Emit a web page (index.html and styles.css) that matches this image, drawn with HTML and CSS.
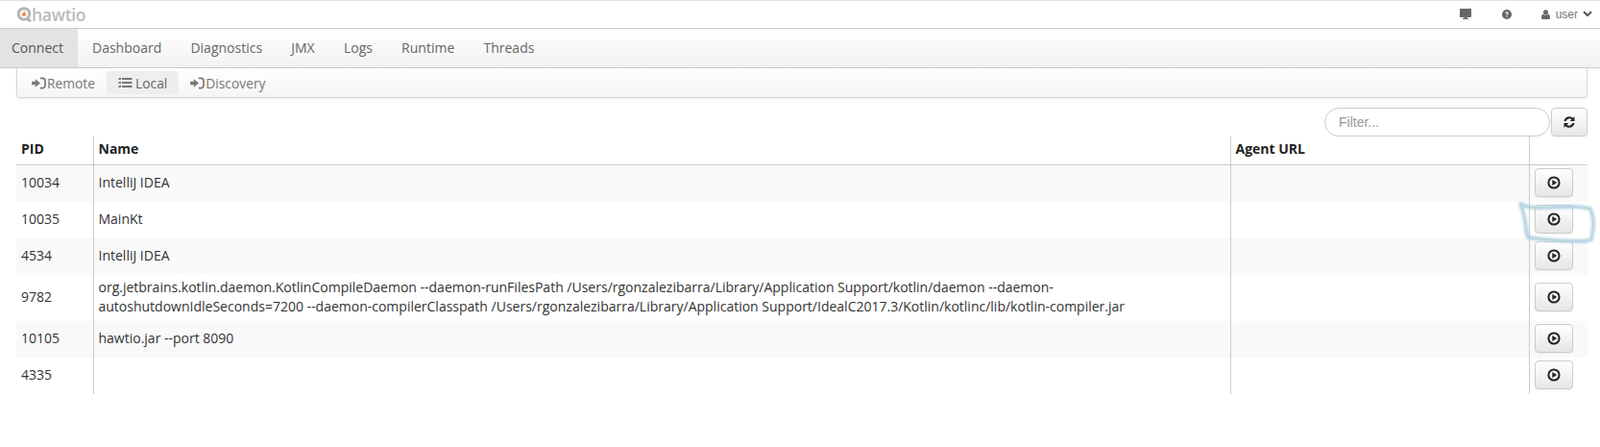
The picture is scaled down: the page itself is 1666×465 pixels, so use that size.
FILE: index.html
```html
<!DOCTYPE html>
<html lang="en">
<head>
<meta charset="utf-8">
<title>hawtio</title>
<link rel="stylesheet" href="styles.css">
</head>
<body>
<svg width="0" height="0" class="defs">
  <defs>
    <symbol id="signin" viewBox="0 0 16 14"><path d="M0 5h4V2.400L9.600 7 4 11.600V9H0z" fill="currentColor"/><path d="M9.500 1.500h2.500a3 3 0 0 1 3 3v5a3 3 0 0 1-3 3H9.500" fill="none" stroke="currentColor" stroke-width="1.800"/></symbol>
    <symbol id="play" viewBox="0 0 14 14"><circle cx="7" cy="7" r="5.600" fill="none" stroke="currentColor" stroke-width="2"/><path d="M5.300 3.900 10.200 7l-4.900 3.100z" fill="currentColor"/></symbol>
  </defs>
</svg>
<header class="masthead">
  <div class="brand">
    <svg class="brand-mark" width="18" height="16" viewBox="0 0 18 16"><circle cx="8" cy="7.500" r="5.800" fill="none" stroke="#b5b5b5" stroke-width="3"/><path d="M11 12l4 3.500" stroke="#b5b5b5" stroke-width="3"/><path d="M8 3.800c.4 1.800 2 2.400 2 4.200a2 2 0 0 1-4 0c0-1 .6-1.500 1-2 .2.600.5.800.8.800.300-1-.2-2-.1-3z" fill="#e8894a"/></svg>
    <span class="brand-name">hawtio</span>
  </div>
  <div class="tools">
    <svg class="tool-icon" width="12" height="11" viewBox="0 0 12 11"><path d="M.8 0h10.400a.8.800 0 0 1 .8.800v7.400a.8.800 0 0 1-.8.800H7.500v1H9v1H3v-1h1.500V9H.8A.8.800 0 0 1 0 8.200V.8A.8.800 0 0 1 .8 0z" fill="#666"/></svg>
    <svg class="tool-icon help" width="10" height="10" viewBox="0 0 11 11"><circle cx="5.500" cy="5.500" r="5.500" fill="#666"/><path d="M3.600 4.200c.1-1.100.9-1.700 1.900-1.700 1.100 0 1.900.6 1.900 1.500 0 1.300-1.400 1.300-1.400 2.300H4.900c0-1.500 1.300-1.500 1.300-2.200 0-.4-.3-.6-.7-.6-.5 0-.8.300-.8.800zM4.900 7.200H6v1.200H4.900z" fill="#fff"/></svg>
    <span class="user">
      <svg width="9" height="10" viewBox="0 0 9 10"><circle cx="4.500" cy="2.700" r="2.500" fill="#666"/><path d="M1.800 4.500C.7 5 0 6.500 0 8.500 0 9.500.6 10 1.400 10h6.200C8.400 10 9 9.500 9 8.500c0-2-.7-3.500-1.800-4-.6.800-1.600 1.200-2.700 1.200S2.400 5.300 1.800 4.500z" fill="#666"/></svg>
      <span class="user-name">user</span>
      <svg width="10" height="7" viewBox="0 0 10 7"><path d="M1 1.200 5 5l4-3.800" fill="none" stroke="#555" stroke-width="2"/></svg>
    </span>
  </div>
</header>
<nav class="mainnav">
  <a class="tab active">Connect</a>
  <a class="tab">Dashboard</a>
  <a class="tab">Diagnostics</a>
  <a class="tab">JMX</a>
  <a class="tab">Logs</a>
  <a class="tab">Runtime</a>
  <a class="tab">Threads</a>
</nav>
<nav class="subnav">
  <a class="pill"><svg class="pill-icon" width="15" height="13"><use href="#signin"/></svg>Remote</a>
  <a class="pill active"><svg class="pill-icon" width="15" height="12" viewBox="0 0 14 12"><path d="M0 1h2.500v2H0zM0 5h2.500v2H0zM0 9h2.500v2H0zM3.500 1H14v2H3.500zM3.500 5H14v2H3.500zM3.500 9H14v2H3.500z" fill="currentColor"/></svg>Local</a>
  <a class="pill"><svg class="pill-icon" width="15" height="13"><use href="#signin"/></svg>Discovery</a>
</nav>
<div class="filterbar">
  <input class="filter" type="text" placeholder="Filter...">
  <button class="btn refresh" type="button"><svg width="14" height="14" viewBox="0 0 14 14"><path d="M1.500 6A5.700 5.700 0 0 1 11 2.800L12.500 1.300V6H7.800l1.700-1.700A3.500 3.500 0 0 0 3.700 6zM12.500 8A5.700 5.700 0 0 1 3 11.200L1.500 12.700V8h4.700l-1.700 1.700A3.500 3.500 0 0 0 10.300 8z" fill="#222"/></svg></button>
</div>
<table class="procs">
  <thead>
    <tr><th class="c-pid">PID</th><th class="c-name">Name</th><th class="c-url">Agent URL</th><th class="c-act"></th></tr>
  </thead>
  <tbody>
    <tr><td>10034</td><td>IntelliJ IDEA</td><td></td><td class="act"><button class="btn run" type="button"><svg width="14" height="14"><use href="#play"/></svg></button></td></tr>
    <tr><td>10035</td><td>MainKt</td><td></td><td class="act"><button class="btn run" type="button"><svg width="14" height="14"><use href="#play"/></svg></button></td></tr>
    <tr><td>4534</td><td>IntelliJ IDEA</td><td></td><td class="act"><button class="btn run" type="button"><svg width="14" height="14"><use href="#play"/></svg></button></td></tr>
    <tr><td>9782</td><td>org.jetbrains.kotlin.daemon.KotlinCompileDaemon --daemon-runFilesPath /Users/rgonzalezibarra/Library/Application Support/kotlin/daemon --daemon-autoshutdownIdleSeconds=7200 --daemon-compilerClasspath /Users/rgonzalezibarra/Library/Application Support/IdealC2017.3/Kotlin/kotlinc/lib/kotlin-compiler.jar</td><td></td><td class="act"><button class="btn run" type="button"><svg width="14" height="14"><use href="#play"/></svg></button></td></tr>
    <tr><td>10105</td><td>hawtio.jar --port 8090</td><td></td><td class="act"><button class="btn run" type="button"><svg width="14" height="14"><use href="#play"/></svg></button></td></tr>
    <tr><td>4335</td><td></td><td></td><td class="act"><button class="btn run" type="button"><svg width="14" height="14"><use href="#play"/></svg></button></td></tr>
  </tbody>
</table>
<svg class="scribble" width="84" height="48" viewBox="0 0 84 48"><path d="M2 5C8 8 12 9 18 9c14 0 28-1 40-1 7 0 12 1 17 2 2 5 3 10 3 15 0 6-1 12-2 17-4 2-9 2-14 2-18 0-36-2-52-4-2-5-2-11-3-17C6 17 4 10 2 5z" fill="none" stroke="#a9cddc" stroke-width="4" stroke-linejoin="round" opacity=".85"/></svg>
</body>
</html>
```

FILE: styles.css
```css
* { box-sizing: border-box; }
html, body { margin: 0; padding: 0; }
body {
  position: relative;
  min-height: 465px;
  overflow: hidden;
  background: #fff;
  color: #333;
  font-family: "Open Sans", "Liberation Sans", sans-serif;
  font-size: 14px;
}
.defs { position: absolute; }

.masthead {
  height: 30px;
  display: flex;
  align-items: center;
  justify-content: space-between;
  border-top: 1px solid #e2e2e2;
  border-bottom: 1px solid #ccc;
  padding: 0 8px 1px 17px;
}
.brand { display: flex; align-items: center; }
.brand-mark { margin-right: -2px; }
.brand-name {
  color: #bbb;
  font-size: 17.5px;
  font-weight: 600;
  line-height: 20px;
  letter-spacing: -0.3px;
}
.tools { display: flex; align-items: center; color: #666; }
.tool-icon { display: block; }
.help { margin-left: 32px; }
.user { display: flex; align-items: center; margin-left: 31px; }
.user-name {
  margin: 0 5px 0 6px;
  font-family: "Liberation Sans", Arial, sans-serif;
  font-size: 12px;
  color: #777;
}

.mainnav {
  height: 41px;
  display: flex;
  background: linear-gradient(#fff, #f2f2f2);
  border-bottom: 1px solid #ccc;
}
.tab {
  display: flex;
  align-items: center;
  padding: 0 15px 2px;
  margin-right: 0.2px;
  color: #666;
  font-size: 14px;
}
.tab.active {
  background: #e3e3e3;
  color: #555;
  margin-right: 0;
  padding: 0 15px 2px 12px;
}

.subnav {
  height: 31px;
  margin: 0 13px 0 17px;
  padding: 0 3px;
  display: flex;
  align-items: center;
  background: linear-gradient(#fff, #f5f5f5);
  border: 1px solid #d8d8d8;
  border-top: 0;
  border-radius: 0 0 4px 4px;
  box-shadow: 0 1px 3px rgba(0, 0, 0, .08);
}
.pill {
  display: flex;
  align-items: center;
  height: 24px;
  padding: 0 12px;
  color: #777;
  font-size: 13.8px;
  border-radius: 3px;
}
.pill.active { background: #eee; color: #666; }
.pill-icon { margin-right: 1px; color: #777; }
.pill.active .pill-icon { margin-right: 3px; }

.filterbar {
  display: flex;
  justify-content: flex-end;
  gap: 1px;
  margin: 10px 13px 0 17px;
  height: 30px;
}
.filter {
  width: 235px;
  height: 30px;
  padding: 0 14px;
  border: 1px solid #ccc;
  border-radius: 15px;
  font-family: "Liberation Sans", Arial, sans-serif;
  font-size: 14px;
  outline: 0;
}
.filter::placeholder { color: #999; }

.btn {
  display: flex;
  align-items: center;
  justify-content: center;
  padding: 0;
  border: 1px solid #ccc;
  border-radius: 4px;
  background: linear-gradient(#fff, #e6e6e6);
  box-shadow: 0 1px 1px rgba(0, 0, 0, .05);
  color: #222;
}
.refresh { width: 38px; height: 30px; }
.run { width: 40px; height: 30px; }

.procs {
  width: 1636px;
  margin: 0 13px 0 17px;
  table-layout: fixed;
  border-collapse: collapse;
  color: #333;
  line-height: 20px;
}
.c-pid { width: 80px; }
.c-url { width: 311px; }
.c-act { width: 61px; }
th {
  height: 29px;
  padding: 0 5px 2px;
  font-weight: 700;
  font-size: 14px;
  text-align: left;
  color: #222;
  vertical-align: middle;
  border-bottom: 1px solid #ccc;
}
td {
  height: 38px;
  padding: 3px 5px 5px;
  font-size: 14px;
  vertical-align: middle;
}
th + th, td + td { border-left: 1px solid #ccc; }
tbody tr:nth-child(odd) { background: #f9f9f9; }
td.act { padding: 3px 5px 5px; }

.scribble {
  position: absolute;
  left: 1581px;
  top: 207px;
  pointer-events: none;
  filter: blur(.8px);
}
```
